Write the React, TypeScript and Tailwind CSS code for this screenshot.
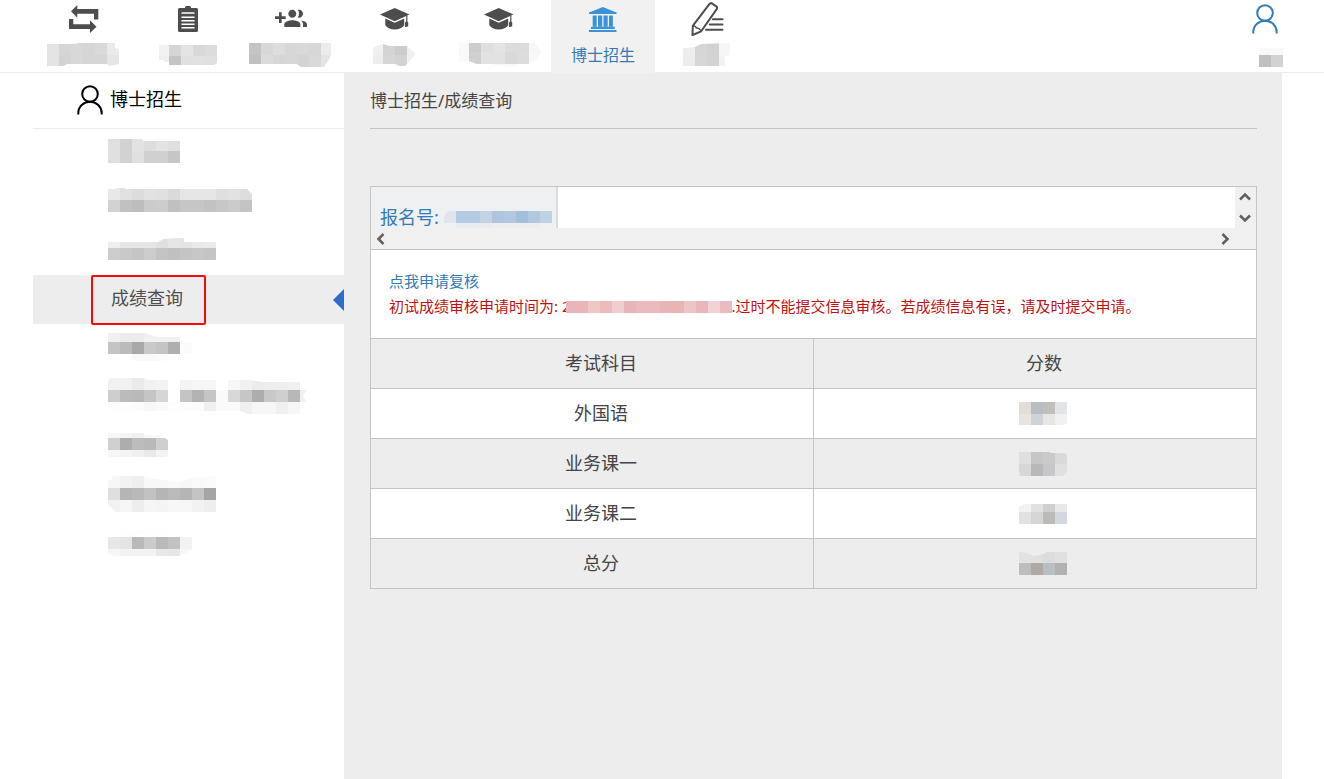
import { useId, type ReactNode } from 'react';

const CELL = 12;

interface MosaicProps {
  // one string per row: "<height> <cell> <cell> ...", cells are "c4" (gray), "e1ddd8" or "--"
  rows: string[];
  trim?: string;
  className?: string;
}

function Mosaic({ rows, trim, className }: MosaicProps) {
  const id = useId();
  const parsed = rows.map((row) => {
    const [height, ...cells] = row.split(' ');
    return { height: Number(height), cells };
  });
  const width = Math.max(...parsed.map((r) => r.cells.length)) * CELL;
  const height = parsed.reduce((sum, r) => sum + r.height, 0);
  let y = 0;

  return (
    <svg width={width} height={height} className={`block shrink-0 ${className ?? ''}`} shapeRendering="crispEdges" aria-hidden="true">
      {trim && (
        <clipPath id={id}>
          <polygon points={trim} />
        </clipPath>
      )}
      <g clipPath={trim ? `url(#${id})` : undefined}>
        {parsed.map((row, r) => {
          const top = y;
          y += row.height;
          return row.cells.map((cell, c) =>
            cell === '--' ? null : (
              <rect
                key={`${r}-${c}`}
                x={c * CELL}
                y={top}
                width={CELL}
                height={row.height}
                fill={cell.length === 2 ? `#${cell}${cell}${cell}` : `#${cell}`}
              />
            )
          );
        })}
      </g>
    </svg>
  );
}

function SwapIcon() {
  return (
    <svg width="32" height="28" viewBox="-2 0 32 28" fill="currentColor">
      <path d="M2 6.300 8.300 0v4h21v10.500H25V8.700H8.300v4z" />
      <path d="M0 14h4.300v5.300H21v-4l6.500 6.400L21 28v-4H0z" />
    </svg>
  );
}

function ClipboardIcon() {
  return (
    <svg width="22" height="26" viewBox="-2 0 22 26">
      <path fill="currentColor" d="M1.500 2H7a3 2.400 0 0 1 6 0h5.500a1.500 1.500 0 0 1 1.500 1.500v21a1.500 1.500 0 0 1-1.500 1.500h-17A1.500 1.500 0 0 1 0 24.500v-21A1.500 1.500 0 0 1 1.500 2z" />
      <path stroke="#fff" strokeWidth="1.500" d="M3.500 7h13M3.500 11.200h13M3.500 14.700h13M3.500 18.200h13M3.500 21.700h13" />
    </svg>
  );
}

function GroupAddIcon() {
  return (
    <svg width="32" height="32" viewBox="0 0 24 24" fill="currentColor">
      <path d="M8 10H5V7H3v3H0v2h3v3h2v-3h3v-2z" />
      <path d="M18 11c1.660 0 2.990-1.340 2.990-3S19.660 5 18 5c-.32 0-.63.05-.91.14.57.81.9 1.790.9 2.860s-.34 2.040-.9 2.860c.28.09.59.14.91.14z" />
      <path d="M13 11c1.660 0 2.990-1.340 2.990-3S14.660 5 13 5c-1.660 0-3 1.340-3 3s1.340 3 3 3z" />
      <path d="M19.620 13.160c.83.73 1.380 1.660 1.380 2.840v2h3v-2c0-1.540-2.370-2.490-4.380-2.840z" />
      <path d="M13 13c-2 0-6 1-6 3v2h12v-2c0-2-4-3-6-3z" />
    </svg>
  );
}

function CapIcon() {
  return (
    <svg width="30" height="22" viewBox="0 0 30 22" fill="currentColor">
      <path d="M0 6.500 14.700 0l14.800 6.500-14.800 6.800z" />
      <path d="M5.300 10.500l9.400 4.200 9.500-4.200v6.500c-1.500 2.800-5 4.500-9.500 4.500S6.800 19.800 5.300 17z" />
      <path d="M26.200 7.500h1.200v6l.8 1v4l-3.200.5v-4.500l1.200-1z" />
    </svg>
  );
}

function BankIcon() {
  return (
    <svg width="28" height="25" viewBox="0 0 28 25" fill="#3a93d9">
      <path d="M13.800 0 27.500 5.500V7H0V5.500z" />
      <path d="M3.700 8.500h4v11.300h-4zM9 8.500h4.200v11.300H9zM14.500 8.500h4.200v11.300h-4.200zM20 8.500h3.900v11.300H20z" />
      <path d="M2 19.800h23.800V22H2zM0 23h27.500v2H0z" />
    </svg>
  );
}

function PencilIcon() {
  return (
    <svg width="33" height="34" viewBox="0 0 33 34" fill="none" stroke="currentColor" strokeWidth="2" strokeLinejoin="round" strokeLinecap="round">
      <path d="M18.300 2.200c.8-1.200 1.800-1.300 2.900-.6l4 2.700c1.100.8 1.200 1.700.5 2.800L10.200 29.300 1.500 33l.3-9.200z" />
      <path d="M2.300 24c2.200-.3 2.700.6 3 2 1.600-.3 3 .4 4.600 2.600" strokeWidth="1.500" />
      <path d="M21.800 17.300h9.700M18.800 22.600h12.700M15 27.800h16.500" />
    </svg>
  );
}

function UserIcon() {
  return (
    <svg width="26" height="30" viewBox="0 0 26 30" fill="none" stroke="currentColor" strokeWidth="2">
      <circle cx="13" cy="9" r="7.800" />
      <path d="M1.300 29.500V28a11.700 11.300 0 0 1 23.400 0v1.500" />
    </svg>
  );
}

function Chevron({ d, label }: { d: string; label: string }) {
  return (
    <button type="button" aria-label={label} className="flex h-5 w-5 items-center justify-center text-[#606060]">
      <svg width="12" height="12" viewBox="0 0 12 12" fill="none" stroke="currentColor" strokeWidth="2.500">
        <path d={d} />
      </svg>
    </button>
  );
}

interface NavItem {
  icon: ReactNode;
  label: ReactNode;
  active?: boolean;
}

const navItems: NavItem[] = [
  {
    icon: <SwapIcon />,
    label: (
      <Mosaic
        rows={['12 e4 d6 d8 d6 d9 ea', '11 e4 d3 d8 d5 d6 e6']}
        trim="0,1 30,1 30,0 68,0 68,5 72,6 72,21 62,23 60,21 20,21 16,23 0,23"
      />
    ),
  },
  {
    icon: <ClipboardIcon />,
    label: (
      <Mosaic
        rows={['11 f2 d5 e4 d8 dc', '9 ef c4 e0 e1 e0']}
        trim="2,0 60,0 60,18 57,20 12,20 12,17 7,17 7,15 2,15"
      />
    ),
  },
  {
    icon: <GroupAddIcon />,
    label: (
      <Mosaic
        rows={['12 c4 d8 dd d7 d9 d7 ec', '12 c0 db d6 d7 d4 d9 e4']}
        trim="0,0 82,0 82,11 81,15 75,24 52,24 48,21 0,21"
      />
    ),
  },
  {
    icon: <CapIcon />,
    label: (
      <Mosaic
        rows={['11 f0 d4 cc f0', '11 ed d6 d3 f0']}
        trim="2,4 8,1 12,0 18,2 36,2 45,10 36,20 34,22 28,22 24,20 2,20"
      />
    ),
  },
  {
    icon: <CapIcon />,
    label: (
      <Mosaic
        rows={['9 f9 cd df e4 dc db f7', '12 f9 d0 e2 e2 d9 dc f8', '3 -- -- -- f7 f9 -- --']}
        trim="2,0 78,0 84,9 80,17 72,21 54,24 42,22 20,21 12,18 2,18"
      />
    ),
  },
  { icon: <BankIcon />, label: '博士招生', active: true },
  {
    icon: <PencilIcon />,
    label: (
      <Mosaic
        rows={['14 ee d6 d2 f6', '9 ec d7 d3 f2']}
        trim="0,5 12,4 18,1 47,0 47,12 42,13 42,23 0,23"
      />
    ),
  },
];

const menuAbove = [
  <Mosaic
    rows={['12 e0 d2 e2 dd e3 df', '12 e0 d2 e0 d0 d0 c6']}
    trim="0,0 34,0 36,2 72,2 72,24 0,24"
  />,
  <Mosaic
    rows={['12 e8 e1 dc e2 e0 da e6 e6 e6 df e2 dd', '12 d2 c1 bd cb cc c0 c6 c6 c2 c7 cb c3']}
    trim="0,1 8,1 8,0 17,0 17,1 139,1 144,6 144,24 0,24"
  />,
  <Mosaic
    rows={['10 ef e6 e6 e5 e0 e6 e4 e9 eb', '12 cc c9 c5 cc c3 c0 c4 c7 c4']}
    trim="0,4 50,4 56,1 70,0 76,0 76,4 108,4 108,22 0,22"
  />,
];

const menuBelow = [
  <Mosaic
    rows={['9 f0 ec ec f1 f1 f1', '12 c4 bb a8 c9 c4 af fb', '7 -- -- f9 f9 fb fd']}
    trim="0,0 38,0 48,4 72,4 84,9 84,21 60,28 28,28 0,21"
  />,
  <Mosaic
    rows={[
      '12 f1 f1 ea f1 f3 -- f4 f6 f6 -- f6 f1 ec ed ee f0',
      '12 ce bb b9 c5 d6 -- c4 b3 c5 fa d8 c6 ad c8 cf b8 f0',
      '12 fd fd fc f7 fa fd fc fb f0 fa fa ef f6 f6 f0 f6',
    ]}
    trim="3,0 36,0 40,2 142,2 154,4 192,4 199,12 195,17 198,24 192,25 192,36 140,36 132,33 0,33 0,3"
  />,
  <Mosaic
    rows={['5 f7 f4 f0 f8 f8', '12 d0 ad bc b9 cf', '7 f6 f4 f0 e9 f3']}
    trim="0,0 36,0 38,2 52,2 60,7 60,22 58,24 1,24 0,16"
  />,
  <Mosaic
    rows={[
      '12 f7 f2 ee f8 f8 fa f7 f9 fb',
      '12 df b5 b9 c2 b5 ba b5 c3 a5',
      '12 f2 f6 ed f5 f4 f7 f7 f2 ee',
    ]}
    trim="6,0 34,0 48,3 72,6 84,2 108,0 108,36 7,36 0,28 0,6"
  />,
  <Mosaic
    rows={['7 -- fe fd fe fe', '12 e7 e4 b9 cb b9 c2 f2', '7 f6 f3 f3 f3 e8 e7 f8']}
    trim="0,0 84,0 84,20 72,26 8,26 0,24"
  />,
];

const scores = [
  { subject: '外国语', rows: ['12 e1ddd8 b9bec5 c0bfbe e3e4e6', '11 e7e5e1 cdd3d7 e6e6e4 eff0f3'], trim: '0,0 48,0 48,21 44,23 0,23' },
  { subject: '业务课一', rows: ['12 dfdfdf c6c6c6 cacac8 d8dada', '12 d9d7d6 b8b8b8 c6c7cb dfe1e1'], trim: '0,0 30,0 32,1 46,1 48,3 48,20 44,24 1,24 0,18' },
  { subject: '业务课二', rows: ['8 f2f2f1 dfe1e5 cfcfcd e7e7e9', '12 e2e2e1 d5d5d4 bcbcb7 d5d7de'], trim: '5,0 48,0 48,20 0,20 0,3' },
  { subject: '总分', rows: ['11 e2e2e2 e0e0df dcdcdc e0e0e0', '12 bdbdbd b0aaa7 b8bec1 b1b1b1'], trim: '0,0 8,1 15,4 25,2 28,0 48,0 48,23 0,23' },
];

function TopBar() {
  return (
    <header className="flex h-[73px] justify-between border-b border-[#ededed] bg-white pl-[31px] pr-[41px]">
      <nav className="flex">
        {navItems.map((item, i) => (
          <a
            key={i}
            href="#"
            className={`flex w-[104px] flex-col items-center text-[16px] ${
              item.active ? 'h-[74px] border-b border-[#e2e2e2] bg-[#f1f1f1] text-[#337ab7]' : 'h-[72px] text-[#4d4d4d]'
            }`}
          >
            <span className="flex h-[38px] items-center">{item.icon}</span>
            <span className="flex h-[33px] items-center">{item.label}</span>
          </a>
        ))}
      </nav>
      <a href="#" aria-label="用户" className="flex flex-col items-end text-[#337ab7]">
        <span className="flex h-[38px] w-[31px] items-center">
          <UserIcon />
        </span>
        <Mosaic rows={['7 f9 f9', '12 c0 d2']} className="mt-[10px]" />
      </a>
    </header>
  );
}

function MenuLink({ children }: { children: ReactNode }) {
  return (
    <li>
      <a href="#" className="flex h-[49px] items-center pb-1 pl-[75px]">
        {children}
      </a>
    </li>
  );
}

function Sidebar() {
  return (
    <aside className="w-[311px] shrink-0 bg-white">
      <h2 className="flex h-14 items-center gap-[7px] border-b border-[#ededed] pb-0.5 pl-11 text-[18px] text-black">
        <UserIcon />
        博士招生
      </h2>
      <ul className="-mt-px">
        {menuAbove.map((item, i) => (
          <MenuLink key={i}>{item}</MenuLink>
        ))}
        <li className="flex h-[49px] items-center justify-between bg-[#ededed] pl-[58px]">
          <a
            href="#"
            aria-current="page"
            className="flex h-[50px] w-[115px] items-center rounded-[2px] border-2 border-[#f90a0a] pb-0.5 pl-[18px] text-[18px] text-[#4d4d4d]"
          >
            成绩查询
          </a>
          <svg width="11" height="22" viewBox="0 0 11 22" fill="#2f6bcb" aria-hidden="true">
            <path d="M11 0v22L0 11z" />
          </svg>
        </li>
        {menuBelow.map((item, i) => (
          <MenuLink key={i}>{item}</MenuLink>
        ))}
      </ul>
    </aside>
  );
}

function ScorePanel() {
  return (
    <section className="mt-[57px]">
      <div className="border border-b-0 border-[#c4c4c4]">
        <div className="flex h-[41px]">
          <div className="flex w-[187px] items-end border-r-2 border-[#dcdcdc] bg-[#eff0f2] pl-[9px] text-[18px] leading-[22px] text-[#337ab7]">
            报名号:
            <Mosaic
              rows={['12 e1e4eb b3cbe0 b3cbe0 c2d3e3 b0c4de b2c7e0 a2c0db b1c8df bfd2e4', '5 -- e7ecf1 e7ecf1 e9ebee ebedef ebedef ebedef ebedef --']}
              trim="0,6 4,0 108,0 108,17 12,17 0,12"
              className="ml-[5px]"
            />
          </div>
          <div className="flex-1 bg-white" />
          <div className="flex w-[21px] flex-col justify-between bg-[#f0f0f0]">
            <Chevron label="向上" d="M1 8.500 6 3.500l5 5" />
            <Chevron label="向下" d="M1 3.500l5 5 5-5" />
          </div>
        </div>
        <div className="flex h-[21px] items-center justify-between bg-[#f0f0f0] pr-[21px]">
          <Chevron label="向左" d="M8.500 1l-5 5 5 5" />
          <Chevron label="向右" d="M3.500 1l5 5-5 5" />
        </div>
        <div className="h-[89px] border-t border-[#c4c4c4] bg-white pl-[18px] pt-[19px] text-[15px] leading-[25px]">
          <a href="#" className="text-[#337ab7]">点我申请复核</a>
          <p className="flex items-center whitespace-nowrap text-[#c10f0f]">
            初试成绩审核申请时间为: 2
            <Mosaic
              rows={['12 eab5b8 eab5b8 eec7c9 ecbcbb efced2 e8b4bc ebbabc ebbabd e8b4b6 e8b4b6 eec5c7 e9b7ba f1d3d7 eabcc2']}
              trim="2,0 168,0 168,12 2,12"
              className="-ml-[7px]"
            />
            .过时不能提交信息审核。若成绩信息有误，请及时提交申请。
          </p>
        </div>
      </div>
      <table className="w-full table-fixed border-collapse text-[18px] text-[#444]">
        <thead>
          <tr className="h-[50px] bg-[#ededed]">
            <th scope="col" className="border border-[#c4c4c4] pl-[18px] font-normal">考试科目</th>
            <th scope="col" className="border border-[#c4c4c4] pl-[18px] font-normal">分数</th>
          </tr>
        </thead>
        <tbody>
          {scores.map((score) => (
            <tr key={score.subject} className="h-[50px] bg-white even:bg-[#ededed]">
              <td className="border border-[#c4c4c4] pl-[18px] text-center">{score.subject}</td>
              <td className="border border-[#c4c4c4] pl-4">
                <Mosaic rows={score.rows} trim={score.trim} className="mx-auto" />
              </td>
            </tr>
          ))}
        </tbody>
      </table>
    </section>
  );
}

export default function App() {
  return (
    <div className="flex min-h-screen flex-col bg-white font-['Noto_Sans','Noto_Sans_CJK_SC',sans-serif]">
      <TopBar />
      <div className="flex flex-1 pl-[33px] pr-[42px]">
        <Sidebar />
        <main className="min-w-0 flex-1 bg-[#ededed] pl-[26px] pr-[25px]">
          <h1 className="flex h-14 items-center border-b border-[#c4c4c4] text-[17px] text-[#444]">博士招生/成绩查询</h1>
          <ScorePanel />
        </main>
      </div>
    </div>
  );
}
